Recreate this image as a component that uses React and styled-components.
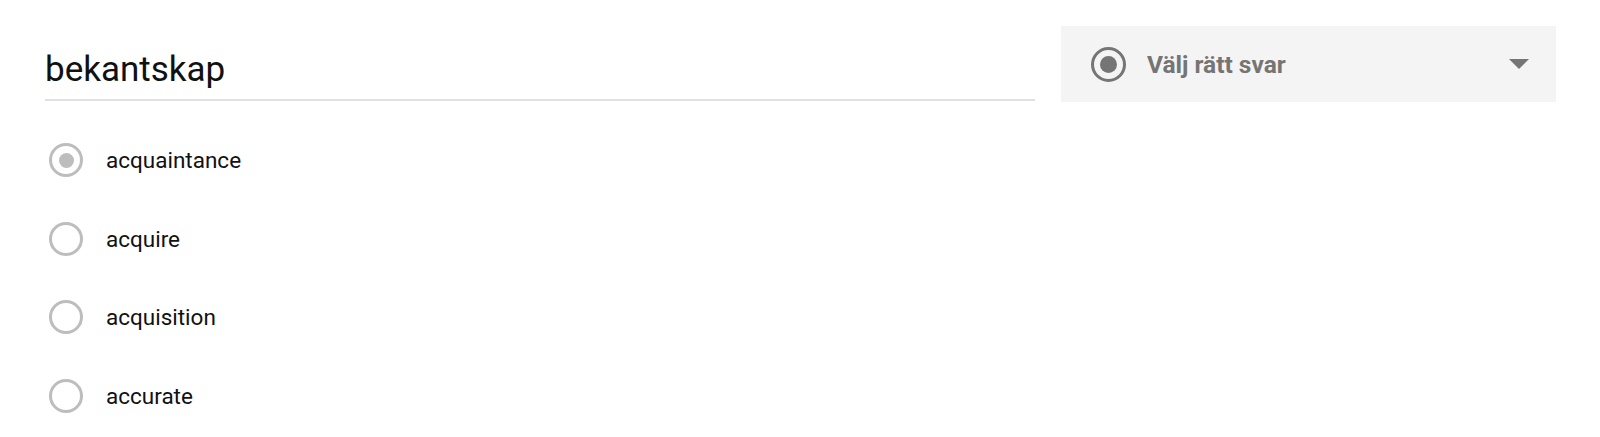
import React from "react";
import styled, { createGlobalStyle } from "styled-components";

const GlobalStyle = createGlobalStyle`
  body {
    margin: 0;
    background: #fff;
    font-family: Roboto, "Liberation Sans", sans-serif;
  }
`;

const Page = styled.div`
  padding: 26px 44px 0 45px;
`;

const Header = styled.div`
  display: flex;
  align-items: flex-start;
  gap: 26px;
`;

const TitleField = styled.div`
  flex: 1;
  height: 75px;
  box-sizing: border-box;
  display: flex;
  align-items: flex-end;
  padding-bottom: 12px;
  border-bottom: 2px solid #e0e0e0;
  font-size: 35px;
  line-height: 1;
  color: #111;
`;

const Dropdown = styled.div`
  width: 495px;
  height: 76px;
  box-sizing: border-box;
  background: #f4f4f4;
  display: flex;
  align-items: center;
  padding: 0 27px 0 30px;
  color: #757575;
  font-weight: 700;
  font-size: 24.5px;
`;

const DropLabel = styled.span`
  flex: 1;
  margin-left: 21px;
`;

const Radio = styled.span`
  width: ${(p) => p.size}px;
  height: ${(p) => p.size}px;
  box-sizing: border-box;
  border-radius: 50%;
  border: ${(p) => p.border}px solid ${(p) => p.color};
  display: flex;
  align-items: center;
  justify-content: center;
  flex-shrink: 0;
  &::after {
    content: "";
    display: ${(p) => (p.checked ? "block" : "none")};
    width: ${(p) => p.dot}px;
    height: ${(p) => p.dot}px;
    border-radius: 50%;
    background: ${(p) => p.color};
  }
`;

const Arrow = styled.span`
  width: 0;
  height: 0;
  border-left: 10px solid transparent;
  border-right: 10px solid transparent;
  border-top: 10px solid #757575;
`;

const Options = styled.div`
  margin-top: 19px;
`;

const Option = styled.div`
  height: 78.6px;
  display: flex;
  align-items: center;
  padding-left: 4px;
  gap: 23px;
  font-size: 22.5px;
  color: #111;
`;

const options = ["acquaintance", "acquire", "acquisition", "accurate"];

export default function App() {
  return (
    <Page>
      <GlobalStyle />
      <Header>
        <TitleField>bekantskap</TitleField>
        <Dropdown>
          <Radio size={35} border={3.5} dot={17} color="#757575" checked />
          <DropLabel>Välj rätt svar</DropLabel>
          <Arrow />
        </Dropdown>
      </Header>
      <Options>
        {options.map((o, i) => (
          <Option key={o}>
            <Radio size={34} border={3} dot={15} color="#bdbdbd" checked={i === 0} />
            {o}
          </Option>
        ))}
      </Options>
    </Page>
  );
}
